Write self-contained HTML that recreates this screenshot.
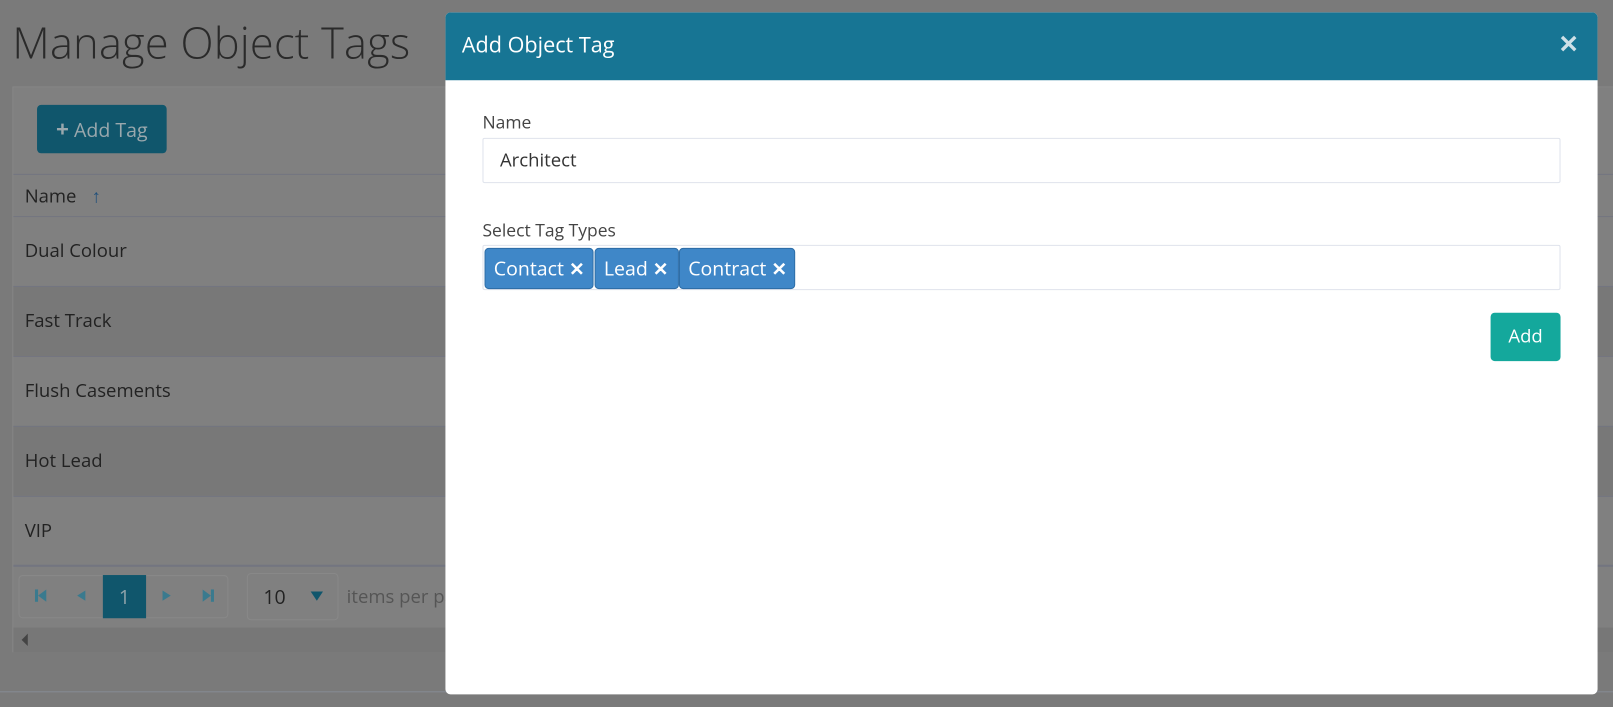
<!DOCTYPE html>
<html><head><style>
*{box-sizing:border-box;margin:0;padding:0}
html,body{width:1613px;height:707px;overflow:hidden;background:#7a7a7a}
#w{position:absolute;left:0;top:0;width:1568px;height:687px;transform:scale(1.0287);transform-origin:0 0;font-family:"Open Sans","Liberation Sans",sans-serif;color:#333}
.h1{position:absolute;left:12px;top:13px;font-size:42px;font-weight:300;color:#2a2a2a;letter-spacing:0.3px}
.panel{position:absolute;left:12px;top:84px;width:1610px;height:550px;background:#808080;border:1px solid #868686}
.btn{position:absolute;left:36px;top:102px;width:126px;height:47px;background:#10566c;border-radius:4px;color:#9aa8ad;font-size:19px;line-height:47px;text-align:center}
.row{position:absolute;left:13px;width:1610px;height:68px;border-top:1px solid #737580;font-size:18px;color:#222;padding-left:11px;line-height:66px}
.alt{background:#787878}
.pg{position:absolute;top:559px;height:42px;border:1px solid #888;border-radius:4px}
.modal{position:absolute;left:433px;top:12px;width:1120px;height:663px;background:#fff;border-radius:5px;overflow:hidden}
.mh{height:66px;background:#177594;color:#fff;font-size:21px;line-height:64px;padding-left:16px}
.x{position:absolute;right:18px;top:14px;color:#cfe0e7;font-size:24px;font-weight:bold}
.lbl{position:absolute;left:36px;font-size:17px;color:#444}
.inp{position:absolute;left:36px;width:1048px;height:44px;border:1px solid #dfe3ec;border-radius:2px}
.tag{position:absolute;top:229px;height:40px;background:#3f87c8;border:1px solid #2e6ea8;border-radius:4px;color:#fff;font-size:19px;line-height:38px;padding-left:8px;white-space:nowrap}
.tag b{font-size:18px}
.add{position:absolute;left:1016px;top:292px;width:68px;height:47px;background:#14a89c;border-radius:4px;color:#fff;font-size:18px;line-height:46px;text-align:center}
</style></head><body><div id="w">
<div class="h1">Manage Object Tags</div>
<div class="panel"></div>
<div class="btn"><b style="font-size:22px">+</b> Add Tag</div>
<div class="row" style="top:169px;height:41px;line-height:42px">Name <span style="color:#1f4f7a;margin-left:10px;font-weight:bold">↑</span></div>
<div class="row" style="top:210px">Dual Colour</div>
<div class="row alt" style="top:278px">Fast Track</div>
<div class="row" style="top:346px">Flush Casements</div>
<div class="row alt" style="top:414px">Hot Lead</div>
<div class="row" style="top:482px">VIP</div>
<div style="position:absolute;left:13px;top:549px;width:1610px;height:2px;background:#737580"></div>
<div style="position:absolute;left:13px;top:610px;width:1610px;height:24px;background:#777"></div>
<div style="position:absolute;left:21px;top:616px;width:0;height:0;border-top:6px solid transparent;border-bottom:6px solid transparent;border-right:6px solid #444"></div>
<div class="pg" style="left:18px;width:204px"></div>
<div style="position:absolute;left:100px;top:559px;width:42px;height:42px;background:#10566c;color:#8fa3aa;font-size:19px;text-align:center;line-height:42px">1</div>
<div style="position:absolute;left:34px;top:573px;width:3px;height:12px;background:#3a7a8e"></div>
<div style="position:absolute;left:37px;top:573px;border-top:6px solid transparent;border-bottom:6px solid transparent;border-right:8px solid #3a7a8e"></div>
<div style="position:absolute;left:75px;top:574px;border-top:5px solid transparent;border-bottom:5px solid transparent;border-right:8px solid #3a7a8e"></div>
<div style="position:absolute;left:158px;top:574px;border-top:5px solid transparent;border-bottom:5px solid transparent;border-left:8px solid #3a7a8e"></div>
<div style="position:absolute;left:197px;top:573px;border-top:6px solid transparent;border-bottom:6px solid transparent;border-left:8px solid #3a7a8e"></div>
<div style="position:absolute;left:205px;top:573px;width:3px;height:12px;background:#3a7a8e"></div>
<div class="pg" style="left:240px;width:89px;top:557px;height:46px"></div>
<div style="position:absolute;left:256px;top:567px;font-size:19px;color:#222">10</div>
<div style="position:absolute;left:302px;top:575px;border-left:6px solid transparent;border-right:6px solid transparent;border-top:9px solid #10566c"></div>
<div style="position:absolute;left:337px;top:568px;font-size:18px;color:#555">items per page</div>
<div style="position:absolute;left:0;top:672px;width:1613px;height:1px;background:#858a93"></div>
<div class="modal">
<div class="mh">Add Object Tag</div>
<div class="x">✕</div>
<div class="lbl" style="top:95px">Name</div>
<div class="inp" style="top:122px;padding-left:16px;line-height:42px;font-size:18px;color:#333">Architect</div>
<div class="lbl" style="top:200px">Select Tag Types</div>
<div class="inp" style="top:226px"></div>
<div class="tag" style="left:38px;width:106px">Contact <b>✕</b></div>
<div class="tag" style="left:145px;width:82px">Lead <b>✕</b></div>
<div class="tag" style="left:227px;width:113px">Contract <b>✕</b></div>
<div class="add">Add</div>
</div>
</div></body></html>
